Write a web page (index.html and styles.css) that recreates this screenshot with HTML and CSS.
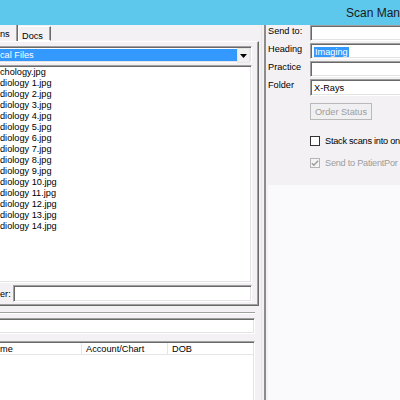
FILE: index.html
```html
<!DOCTYPE html>
<html>
<head>
<meta charset="utf-8">
<link rel="stylesheet" href="styles.css">
</head>
<body>
<div class="window">
  <div class="titlebar">Scan Man</div>
  <div class="main">
    <div class="left">
      <div class="tabs">
        <div class="tab tab-active">ns</div>
        <div class="tab tab-docs">Docs</div>
      </div>
      <div class="tabpage">
        <div class="combo">
          <div class="combo-text">cal Files</div>
          <div class="combo-btn"><svg width="7" height="4" viewBox="0 0 7 4"><path d="M0 0h7L3.5 4z" fill="#000"/></svg></div>
        </div>
        <ul class="listbox">
          <li>chology.jpg</li>
          <li>diology 1.jpg</li>
          <li>diology 2.jpg</li>
          <li>diology 3.jpg</li>
          <li>diology 4.jpg</li>
          <li>diology 5.jpg</li>
          <li>diology 6.jpg</li>
          <li>diology 7.jpg</li>
          <li>diology 8.jpg</li>
          <li>diology 9.jpg</li>
          <li>diology 10.jpg</li>
          <li>diology 11.jpg</li>
          <li>diology 12.jpg</li>
          <li>diology 13.jpg</li>
          <li>diology 14.jpg</li>
        </ul>
        <div class="filter-row">
          <span class="filter-label">er:</span>
          <div class="field filter-field"></div>
        </div>
      </div>
      <div class="separator"></div>
      <div class="field search"></div>
      <div class="listview">
        <div class="lv-header">
          <div class="lv-col col-name">me</div>
          <div class="lv-col col-acct">Account/Chart</div>
          <div class="lv-col col-dob">DOB</div>
        </div>
      </div>
    </div>
    <div class="splitter"></div>
    <div class="right">
      <div class="form">
        <label class="form-label">Send to:</label>
        <div class="field"></div>
        <label class="form-label">Heading</label>
        <div class="field"><span class="selected">Imaging</span></div>
        <label class="form-label">Practice</label>
        <div class="field"></div>
        <label class="form-label">Folder</label>
        <div class="field field-folder">X-Rays</div>
      </div>
      <button class="btn" disabled>Order Status</button>
      <div class="check-row">
        <span class="checkbox"></span>
        <span class="check-text">Stack scans into on</span>
      </div>
      <div class="check-row check-disabled">
        <span class="checkbox"><svg width="9" height="9" viewBox="0 0 9 9"><path d="M1 4.2l2.2 2.3L8 1.5" fill="none" stroke="#9c9c9c" stroke-width="1.6"/></svg></span>
        <span class="check-text">Send to PatientPor</span>
      </div>
      <div class="panel"></div>
    </div>
  </div>
</div>
</body>
</html>
```

FILE: styles.css
```css
* { box-sizing: border-box; }

body {
  margin: 0;
  width: 400px;
  height: 400px;
  overflow: hidden;
  background: #f3f1f4;
  font-family: "Liberation Sans", Arial, sans-serif;
  font-size: 9.2px;
  color: #000;
}

.window {
  width: 400px;
  height: 400px;
  overflow: hidden;
}

.titlebar {
  height: 25px;
  background: #5ec8ec;
  padding-left: 346px;
  white-space: nowrap;
  overflow: hidden;
  font-size: 12px;
  line-height: 27px;
  color: #1a1a1a;
}

.main {
  display: flex;
  height: 375px;
}

/* left column */
.left {
  width: 261px;
  flex: none;
  display: flex;
  flex-direction: column;
  padding-right: 6px;
}

.tabs {
  display: flex;
  height: 16px;
  width: 255px;
}

.tab {
  height: 16px;
  line-height: 14px;
  white-space: nowrap;
}

.tab-active {
  width: 18px;
  padding-top: 2px;
  border-right: 1px solid #696969;
  box-shadow: inset -1px 0 0 #a0a0a0;
}

.tab-docs {
  width: 33px;
  margin-top: 1px;
  height: 15px;
  padding: 2px 0 0 3px;
  border-top: 1px solid #fff;
  border-left: 1px solid #fff;
  border-right: 1px solid #696969;
  border-bottom: 1px solid #fff;
  box-shadow: inset -1px 0 0 #a0a0a0;
}

.tabpage {
  width: 259px;
  height: 265px;
  border-top: 1px solid #fff;
  border-right: 1px solid #696969;
  border-bottom: 1px solid #696969;
  box-shadow: inset -1px -1px 0 #a0a0a0;
  padding: 4px 6px 3px 0;
  display: flex;
  flex-direction: column;
  gap: 2px;
}

.combo {
  height: 17px;
  flex: none;
  display: flex;
  background: #fff;
  border-top: 1px solid #a0a0a0;
  border-right: 1px solid #fff;
  border-bottom: 1px solid #fff;
  box-shadow: inset 0 1px 0 #696969, inset -1px -1px 0 #e3e3e3;
  padding: 2px 1px 1px 0;
}

.combo-text {
  flex: 1;
  background: #3399ff;
  color: #fff;
  line-height: 12px;
  white-space: nowrap;
}

.combo-btn {
  width: 13px;
  margin-top: -1px;
  height: 15px;
  background: #f0f0f0;
  border: 1px solid #e6e6e6;
  display: flex;
  align-items: center;
  justify-content: center;
}

.listbox {
  flex: 1;
  margin: 0;
  padding: 1px 0 0 0;
  list-style: none;
  background: #fff;
  border-top: 1px solid #a0a0a0;
  border-right: 1px solid #fff;
  border-bottom: 1px solid #fff;
  box-shadow: inset 0 1px 0 #696969, inset -1px -1px 0 #e3e3e3;
  overflow: hidden;
}

.listbox li {
  height: 11px;
  line-height: 11px;
  white-space: nowrap;
}

.filter-row {
  display: flex;
  align-items: center;
  height: 17px;
  flex: none;
  gap: 3px;
}

.filter-label {
  width: 10px;
}

.field {
  height: 16px;
  background: #fff;
  border-top: 1px solid #a0a0a0;
  border-left: 1px solid #a0a0a0;
  border-right: 1px solid #fff;
  border-bottom: 1px solid #fff;
  box-shadow: inset 1px 1px 0 #696969, inset -1px -1px 0 #e3e3e3;
  padding: 2px 3px 0;
  line-height: 12px;
  white-space: nowrap;
}

.filter-field {
  flex: 1;
  height: 17px;
}

.separator {
  margin-top: 6px;
  height: 2px;
  border-top: 1px solid #a0a0a0;
  border-bottom: 1px solid #fff;
}

.search {
  margin-top: 4px;
  border-left: none;
  box-shadow: inset 0 1px 0 #696969, inset -1px -1px 0 #e3e3e3;
}

.listview {
  margin-top: 7px;
  flex: 1;
  background: #fff;
  border-top: 1px solid #a0a0a0;
  border-right: 1px solid #fff;
  box-shadow: inset 0 1px 0 #696969, inset -1px 0 0 #e3e3e3;
  padding-top: 1px;
}

.lv-header {
  display: flex;
  height: 12px;
  border-bottom: 1px solid #e5e5e5;
}

.lv-col {
  line-height: 12px;
  white-space: nowrap;
  border-right: 1px solid #e5e5e5;
  padding-left: 4px;
}

.col-name { width: 82px; padding-left: 0; }
.col-acct { width: 86px; }
.col-dob { flex: 1; border-right: none; }

/* splitter */
.splitter {
  width: 5px;
  flex: none;
  border-left: 1px solid #e8e6e9;
  border-right: 2px solid #8c8c8c;
}

/* right column */
.right {
  width: 300px;
  flex: none;
  display: flex;
  flex-direction: column;
  padding-left: 1px;
}

.form {
  display: grid;
  grid-template-columns: 43px 1fr;
  row-gap: 2px;
}

.form-label {
  line-height: 12px;
  padding-left: 1px;
}

.field-folder {
  height: 17px;
}

.selected {
  background: #3399ff;
  color: #fff;
  padding: 0 1px;
}

.btn {
  margin: 7px 0 0 43px;
  width: 62px;
  height: 17px;
  padding: 0;
  background: #f0eff1;
  border: 1px solid #b9b9b9;
  font-family: inherit;
  font-size: 9.2px;
  color: #9d9d9d;
}

.check-row {
  display: flex;
  align-items: center;
  gap: 5px;
  height: 12px;
  margin-top: 15px;
  padding-left: 43px;
  white-space: nowrap;
}

.check-row + .check-row {
  margin-top: 10px;
}

.check-text {
  letter-spacing: -0.25px;
}

.checkbox {
  width: 10px;
  height: 10px;
  flex: none;
  background: #fff;
  border: 1px solid #333;
  display: flex;
  align-items: center;
  justify-content: center;
}

.check-disabled {
  color: #9d9d9d;
}

.check-disabled .checkbox {
  border-color: #b5b5b5;
  background: #f4f4f4;
}

.panel {
  margin: 16px 0 0 1px;
  flex: 1;
  background: #faf9fb;
}
```
